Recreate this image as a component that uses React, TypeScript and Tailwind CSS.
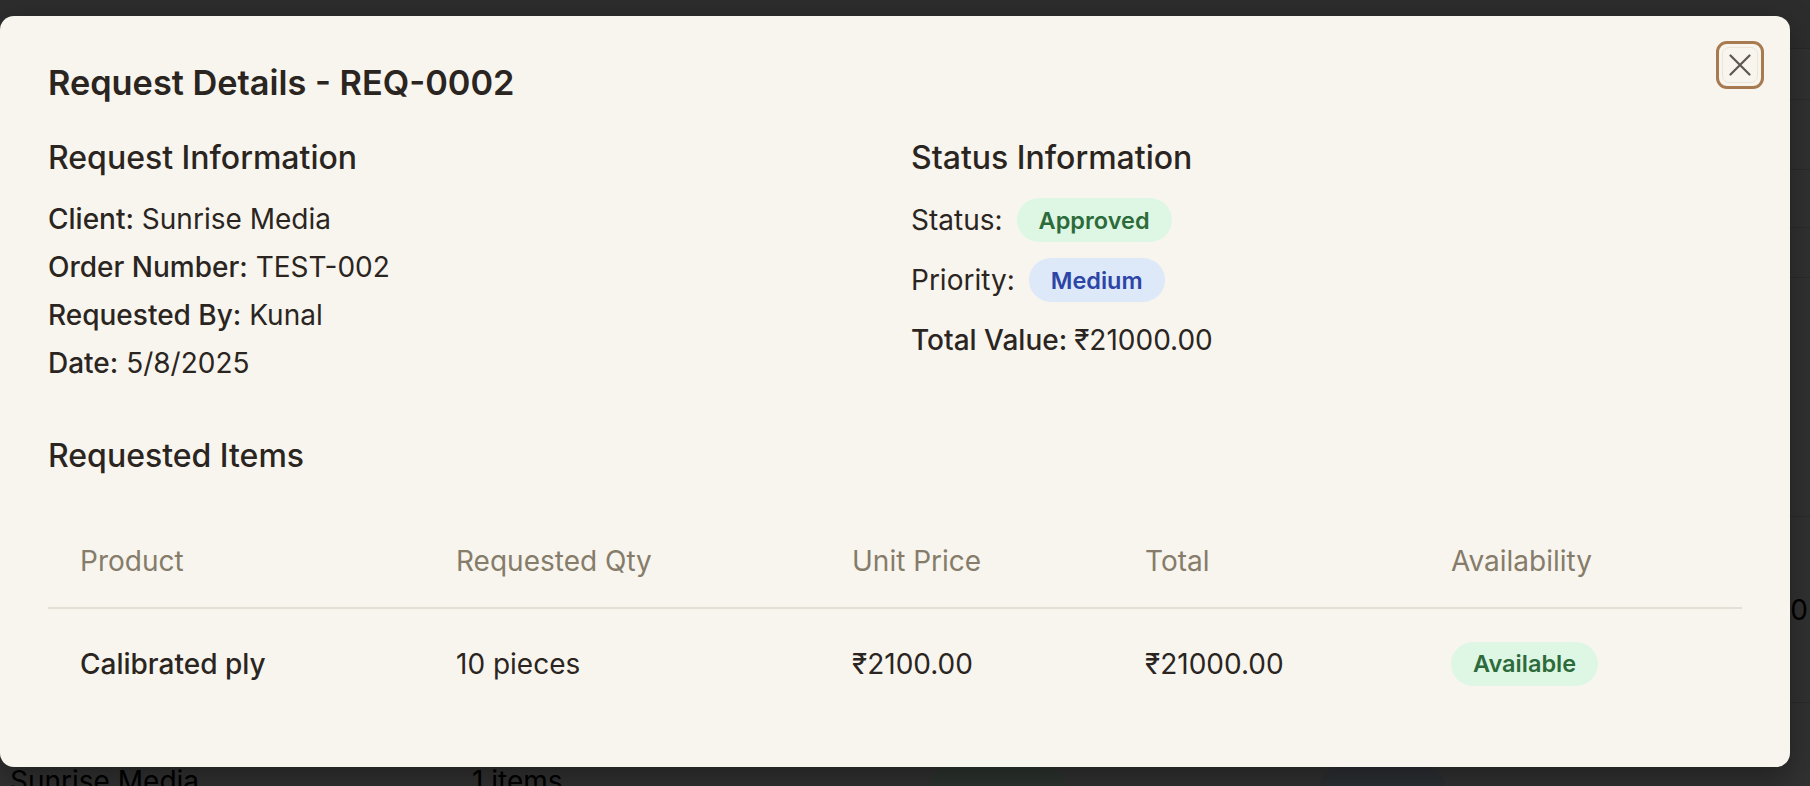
import React from "react";

const requestInfo = [
  { label: "Client:", value: "Sunrise Media" },
  { label: "Order Number:", value: "TEST-002" },
  { label: "Requested By:", value: "Kunal" },
  { label: "Date:", value: "5/8/2025" },
];

const columns = [
  { name: "Product", width: "w-[376px]" },
  { name: "Requested Qty", width: "w-[396px]" },
  { name: "Unit Price", width: "w-[293px]" },
  { name: "Total", width: "w-[306px]" },
  { name: "Availability", width: "" },
];

const items = [
  {
    product: "Calibrated ply",
    qty: "10 pieces",
    unitPrice: "₹2100.00",
    total: "₹21000.00",
    availability: "Available",
  },
];

// the list page that sits behind the dialog
const BackgroundPage = () => (
  <div className="flex flex-col text-black">
    <div className="h-[49px] border-b border-[#c9c9c9] bg-[#e2e2e2]" />
    <div className="h-[51px] border-b border-[#cfcfcf] bg-[#f6f6f6]" />
    <div className="h-[70px] border-b border-[#cfcfcf] bg-[#f6f6f6]" />
    <div className="h-[58px] border-b border-[#cfcfcf] bg-[#f3f3f3]" />
    <div className="h-[50px] border-b border-[#cfcfcf] bg-[#f3f3f3]" />
    <div className="h-[239px] border-b border-[#cfcfcf] bg-[#f3f3f3]" />
    <div className="flex h-[186px] items-center justify-end border-b border-[#cfcfcf] bg-[#f3f3f3] pr-[2px] text-[28px]">
      ₹21000.00
    </div>
    <div className="flex h-[100px] items-start bg-[#f3f3f3] pt-[58px] text-[28px] leading-[40px]">
      <span className="w-[472px] pl-[10px]">Sunrise Media</span>
      <span className="w-[458px]">1 items</span>
      <span className="mt-[6px] h-[40px] w-[135px] rounded-full bg-[#dcfce7]" />
      <span className="ml-[255px] mt-[6px] h-[40px] w-[125px] rounded-full bg-[#dbeafe]" />
    </div>
  </div>
);

const Pill = ({ text, tone }: { text: string; tone: "green" | "blue" }) => (
  <span
    className={
      tone === "green"
        ? "inline-flex h-[44px] items-center rounded-full bg-[#def7e5] px-[22px] text-[23.5px] font-semibold text-[#2d6b3b]"
        : "inline-flex h-[44px] items-center rounded-full bg-[#dde8f8] px-[22px] text-[23.5px] font-semibold text-[#2c45a6]"
    }
  >
    {text}
  </span>
);

const CloseIcon = () => (
  <svg width="22" height="22" viewBox="0 0 22 22" fill="none">
    <path
      d="M1.5 1.5L20.5 20.5M20.5 1.5L1.5 20.5"
      stroke="#5b5753"
      strokeWidth="2.2"
      strokeLinecap="round"
    />
  </svg>
);

const RequestDetailsModal = () => (
  <div className="absolute left-0 top-[16px] h-[751px] w-[1790px] rounded-[14px] bg-[#f8f5ee] px-12 pt-[46px] text-[#2b2522] shadow-[0_10px_30px_rgba(0,0,0,0.35)]">
    <button className="absolute right-[26px] top-[25px] flex h-[48px] w-[48px] items-center justify-center rounded-[11px] border-[3px] border-[#a77a50] p-[3px]">
      <span className="flex h-full w-full items-center justify-center rounded-[7px] border border-[#ebe5d9]">
        <CloseIcon />
      </span>
    </button>

    <h2 className="text-[34.3px] font-semibold leading-[42px]">
      Request Details - REQ-0002
    </h2>

    <div className="mt-[34px] grid grid-cols-2 gap-8">
      <div>
        <h3 className="text-[32px] font-medium leading-[40px]">
          Request Information
        </h3>
        <div className="mt-[17px] flex flex-col">
          {requestInfo.map((row) => (
            <p key={row.label} className="h-[48px] text-[28px] leading-[48px]">
              <span className="font-medium">{row.label}</span> {row.value}
            </p>
          ))}
        </div>
      </div>

      <div>
        <h3 className="text-[32px] font-medium leading-[40px]">
          Status Information
        </h3>
        <div className="mt-[12px] flex flex-col">
          <div className="flex h-[60px] items-center text-[28px]">
            <span>Status:</span>
            <span className="ml-[14px]">
              <Pill text="Approved" tone="green" />
            </span>
          </div>
          <div className="flex h-[60px] items-center text-[28px]">
            <span>Priority:</span>
            <span className="ml-[14px]">
              <Pill text="Medium" tone="blue" />
            </span>
          </div>
          <div className="flex h-[60px] items-center text-[28px]">
            <span className="font-medium">Total Value:</span>
            <span className="ml-[7px]">₹21000.00</span>
          </div>
        </div>
      </div>
    </div>

    <h3 className="mt-[49px] text-[32px] font-medium leading-[40px]">
      Requested Items
    </h3>

    <table className="mt-[38px] w-full table-fixed border-collapse text-left">
      <thead>
        <tr className="border-b-2 border-[#e4dfd5]">
          {columns.map((col) => (
            <th
              key={col.name}
              className={`${col.width} h-[94px] px-8 align-middle text-[28px] font-normal text-[#867c6a]`}
            >
              {col.name}
            </th>
          ))}
        </tr>
      </thead>
      <tbody>
        {items.map((item) => (
          <tr key={item.product}>
            <td className="h-[110px] px-8 text-[28px] font-medium">
              {item.product}
            </td>
            <td className="h-[110px] px-8 text-[28px]">{item.qty}</td>
            <td className="h-[110px] px-8 text-[28px]">{item.unitPrice}</td>
            <td className="h-[110px] px-8 text-[28px]">{item.total}</td>
            <td className="h-[110px] px-8">
              <Pill text={item.availability} tone="green" />
            </td>
          </tr>
        ))}
      </tbody>
    </table>
  </div>
);

export default function App() {
  return (
    <div className="relative h-[786px] w-full overflow-hidden bg-[#f3f3f3] font-['Inter',sans-serif]">
      <BackgroundPage />
      <div className="absolute inset-0 bg-black/80" />
      <RequestDetailsModal />
    </div>
  );
}
